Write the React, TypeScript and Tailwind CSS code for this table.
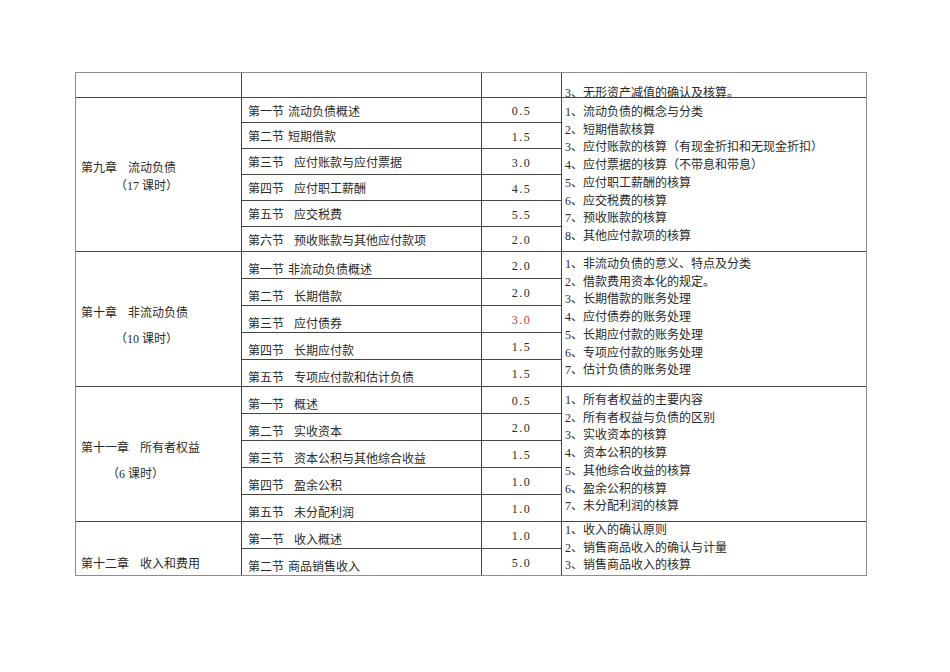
type Section = { no: string; name: string; wide: boolean; hours: string; h: string; red?: boolean };
type Chapter = {
  head: string;
  title: string;
  sub?: string;
  subIndent?: string;
  titleBox: string;
  nameBox: string;
  numBox: string;
  listBox: string;
  sections: Section[];
  items: string[];
};

const font = { fontFamily: '"Liberation Serif", "Noto Sans CJK SC", serif' };

const chapters: Chapter[] = [
  {
    head: '第九章',
    title: '流动负债',
    sub: '（17 课时）',
    subIndent: 'pl-[34px]',
    titleBox: 'justify-center pt-[7px]',
    nameBox: 'pt-[3px]',
    numBox: 'pt-[2px]',
    listBox: 'pt-[6px]',
    sections: [
      { no: '第一节', name: '流动负债概述', wide: false, hours: '0.5', h: 'h-[25px]' },
      { no: '第二节', name: '短期借款', wide: false, hours: '1.5', h: 'h-[26px]' },
      { no: '第三节', name: '应付账款与应付票据', wide: true, hours: '3.0', h: 'h-[26px]' },
      { no: '第四节', name: '应付职工薪酬', wide: true, hours: '4.5', h: 'h-[26px]' },
      { no: '第五节', name: '应交税费', wide: true, hours: '5.5', h: 'h-[26px]' },
      { no: '第六节', name: '预收账款与其他应付款项', wide: true, hours: '2.0', h: 'h-[25px]' },
    ],
    items: [
      '1、流动负债的概念与分类',
      '2、短期借款核算',
      '3、应付账款的核算（有现金折扣和无现金折扣）',
      '4、应付票据的核算（不带息和带息）',
      '5、应付职工薪酬的核算',
      '6、应交税费的核算',
      '7、预收账款的核算',
      '8、其他应付款项的核算',
    ],
  },
  {
    head: '第十章',
    title: '非流动负债',
    sub: '（10 课时）',
    subIndent: 'pl-[34px] mt-[8px]',
    titleBox: 'justify-center pt-[15px]',
    nameBox: 'pt-[10px]',
    numBox: 'pt-[1px]',
    listBox: 'pt-[4px]',
    sections: [
      { no: '第一节', name: '非流动负债概述', wide: false, hours: '2.0', h: 'h-[27px]' },
      { no: '第二节', name: '长期借款', wide: true, hours: '2.0', h: 'h-[27px]' },
      { no: '第三节', name: '应付债券', wide: true, hours: '3.0', h: 'h-[27px]', red: true },
      { no: '第四节', name: '长期应付款', wide: true, hours: '1.5', h: 'h-[27px]' },
      { no: '第五节', name: '专项应付款和估计负债', wide: true, hours: '1.5', h: 'h-[27px]' },
    ],
    items: [
      '1、非流动负债的意义、特点及分类',
      '2、借款费用资本化的规定。',
      '3、长期借款的账务处理',
      '4、应付债券的账务处理',
      '5、长期应付款的账务处理',
      '6、专项应付款的账务处理',
      '7、估计负债的账务处理',
    ],
  },
  {
    head: '第十一章',
    title: '所有者权益',
    sub: '（6 课时）',
    subIndent: 'pl-[26px] mt-[8px]',
    titleBox: 'justify-center pt-[15px]',
    nameBox: 'pt-[10px]',
    numBox: 'pt-[2px]',
    listBox: 'pt-[5px]',
    sections: [
      { no: '第一节', name: '概述', wide: true, hours: '0.5', h: 'h-[27px]' },
      { no: '第二节', name: '实收资本', wide: true, hours: '2.0', h: 'h-[27px]' },
      { no: '第三节', name: '资本公积与其他综合收益', wide: true, hours: '1.5', h: 'h-[27px]' },
      { no: '第四节', name: '盈余公积', wide: true, hours: '1.0', h: 'h-[27px]' },
      { no: '第五节', name: '未分配利润', wide: true, hours: '1.0', h: 'h-[27px]' },
    ],
    items: [
      '1、所有者权益的主要内容',
      '2、所有者权益与负债的区别',
      '3、实收资本的核算',
      '4、资本公积的核算',
      '5、其他综合收益的核算',
      '6、盈余公积的核算',
      '7、未分配利润的核算',
    ],
  },
  {
    head: '第十二章',
    title: '收入和费用',
    titleBox: 'justify-end pb-[1px]',
    nameBox: 'pt-[9px]',
    numBox: 'pt-[2px]',
    listBox: 'pt-[0px]',
    sections: [
      { no: '第一节', name: '收入概述', wide: true, hours: '1.0', h: 'h-[27px]' },
      { no: '第二节', name: '商品销售收入', wide: false, hours: '5.0', h: 'h-[26px]' },
    ],
    items: ['1、收入的确认原则', '2、销售商品收入的确认与计量', '3、销售商品收入的核算'],
  },
];

function ChapterBlock({ c, last }: { c: Chapter; last: boolean }) {
  const edge = last ? '' : 'border-b';
  return (
    <div className="flex">
      <div className={`w-[166px] shrink-0 border-r border-[#444] flex flex-col pl-[5px] ${edge} ${c.titleBox}`}>
        <div className="w-full leading-[17.7px]">
          {c.head}
          <span className="ml-[11px]">{c.title}</span>
        </div>
        {c.sub && <div className={`w-full leading-[17.7px] ${c.subIndent}`}>{c.sub}</div>}
      </div>
      <div className="w-[320px] shrink-0 flex flex-col">
        {c.sections.map((s, i) => {
          const b = last && i === c.sections.length - 1 ? '' : 'border-b';
          return (
            <div key={s.no} className={`flex ${s.h} ${b} border-[#444]`}>
              <div className={`w-[240px] shrink-0 border-r border-[#444] flex items-center pl-[6px] ${c.nameBox}`}>
                {s.no}
                <span className={s.wide ? 'ml-[10px]' : 'ml-[4px]'}>{s.name}</span>
              </div>
              <div
                className={`w-[80px] shrink-0 border-r border-[#444] flex items-center justify-center tracking-[1.5px] ${c.numBox} ${
                  s.red ? 'text-[#e0302c]' : ''
                }`}
              >
                {s.hours}
              </div>
            </div>
          );
        })}
      </div>
      <div className={`w-[304px] shrink-0 border-[#444] pl-[3px] ${edge} ${c.listBox}`}>
        {c.items.map((t) => (
          <div key={t} className="leading-[17.7px] whitespace-nowrap">
            {t}
          </div>
        ))}
      </div>
    </div>
  );
}

export default function App() {
  return (
    <div className="min-h-[672px] w-[950px] bg-white pt-[72px] pl-[75px] text-[12px] text-[#2a2a2a]" style={font}>
      <div className="w-[792px] border border-[#8c8c8c]">
        <div className="flex h-[25px] border-b border-[#444]">
          <div className="w-[166px] shrink-0 border-r border-[#444]" />
          <div className="w-[240px] shrink-0 border-r border-[#444]" />
          <div className="w-[80px] shrink-0 border-r border-[#444]" />
          <div className="w-[304px] shrink-0 pl-[3px] pt-[12px] leading-[17.7px] whitespace-nowrap">
            3、无形资产减值的确认及核算。
          </div>
        </div>
        {chapters.map((c, i) => (
          <ChapterBlock key={c.head} c={c} last={i === chapters.length - 1} />
        ))}
      </div>
    </div>
  );
}
